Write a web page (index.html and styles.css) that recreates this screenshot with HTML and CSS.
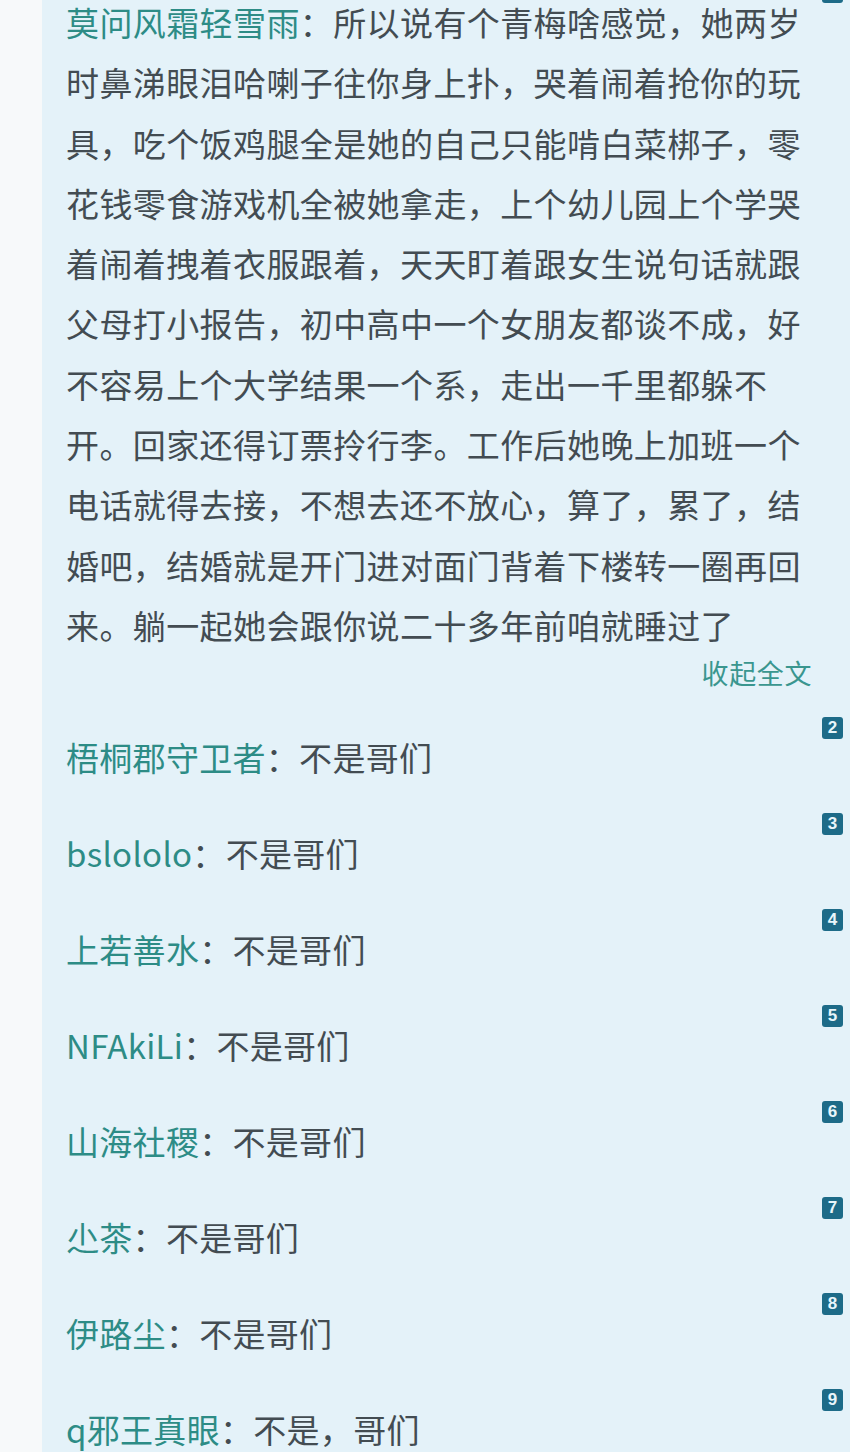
FILE: index.html
```html
<!DOCTYPE html>
<html lang="zh-CN">
<head>
    <meta charset="utf-8">
    <title>评论</title>
    <link rel="stylesheet" href="styles.css">
</head>
<body>
    <div class="page">
        <div class="panel">
            <div class="comment first">
                <span class="badge">1</span>
                <p class="post"><span class="name">莫问风霜轻雪雨</span>：所以说有个青梅啥感觉，她两岁时鼻涕眼泪哈喇子往你身上扑，哭着闹着抢你的玩具，吃个饭鸡腿全是她的自己只能啃白菜梆子，零花钱零食游戏机全被她拿走，上个幼儿园上个学哭着闹着拽着衣服跟着，天天盯着跟女生说句话就跟父母打小报告，初中高中一个女朋友都谈不成，好不容易上个大学结果一个系，走出一千里都躲不开。回家还得订票拎行李。工作后她晚上加班一个电话就得去接，不想去还不放心，算了，累了，结婚吧，结婚就是开门进对面门背着下楼转一圈再回来。躺一起她会跟你说二十多年前咱就睡过了</p>
                <div class="fold">收起全文</div>
            </div>

            <div class="comment">
                <span class="badge">2</span>
                <p class="line"><span class="name">梧桐郡守卫者</span>：不是哥们</p>
            </div>
            <div class="comment">
                <span class="badge">3</span>
                <p class="line"><span class="name">bslololo</span>：不是哥们</p>
            </div>
            <div class="comment">
                <span class="badge">4</span>
                <p class="line"><span class="name">上若善水</span>：不是哥们</p>
            </div>
            <div class="comment">
                <span class="badge">5</span>
                <p class="line"><span class="name">NFAkiLi</span>：不是哥们</p>
            </div>
            <div class="comment">
                <span class="badge">6</span>
                <p class="line"><span class="name">山海社稷</span>：不是哥们</p>
            </div>
            <div class="comment">
                <span class="badge">7</span>
                <p class="line"><span class="name">尐茶</span>：不是哥们</p>
            </div>
            <div class="comment">
                <span class="badge">8</span>
                <p class="line"><span class="name">伊路尘</span>：不是哥们</p>
            </div>
            <div class="comment">
                <span class="badge">9</span>
                <p class="line"><span class="name">q邪王真眼</span>：不是，哥们</p>
            </div>
        </div>
    </div>
</body>
</html>
```

FILE: styles.css
```css
body {
    margin: 0;
    padding: 0;
    background-color: #f7f9fa;
    font-family: "Noto Sans CJK SC", "Noto Sans", sans-serif;
    overflow: hidden;
}

.page {
    height: 1452px;
    overflow: hidden;
}

.panel {
    margin-left: 42px;
    min-height: 1600px;
    background-color: #e4f2f9;
    padding: 0 7px 0 24px;
    margin-top: -19px;
}

.comment {
    display: flex;
    flex-direction: column;
    padding-bottom: 34px;
}

.comment.first {
    padding-bottom: 26px;
}

.badge {
    align-self: flex-end;
    width: 21px;
    height: 22px;
    border-radius: 3px;
    background-color: #1d6b88;
    color: #e8f6fb;
    font-family: "Liberation Sans", Arial, sans-serif;
    font-weight: bold;
    font-size: 17px;
    line-height: 22px;
    text-align: center;
}

.post {
    margin: -11px 0 0 0;
    width: 750px;
    font-size: 33px;
    letter-spacing: 0.4px;
    line-height: 60.3px;
    color: #434c52;
}

.line {
    margin: -4px 0 0 0;
    font-size: 33px;
    letter-spacing: 0.3px;
    line-height: 44px;
    color: #434c52;
}

.name {
    color: #2d8c86;
}

.fold {
    align-self: flex-end;
    margin: 0 31px 0 0;
    font-size: 27px;
    line-height: 36px;
    letter-spacing: 0.6px;
    color: #3a968f;
}
```
